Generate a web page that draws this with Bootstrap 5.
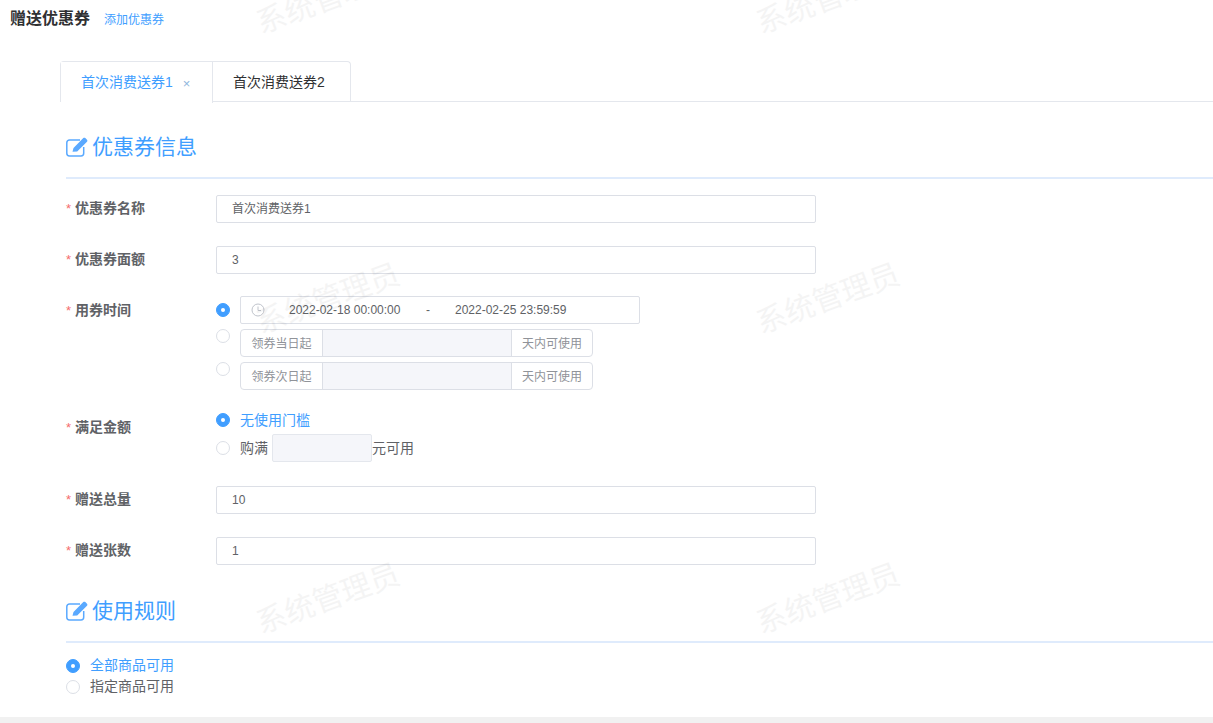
<!DOCTYPE html>
<html lang="zh">
<head>
<meta charset="utf-8">
<title>赠送优惠券</title>
<link rel="stylesheet" href="https://cdn.jsdelivr.net/npm/bootstrap@5.3.0/dist/css/bootstrap.min.css">
<style>
html,body{height:723px;overflow:hidden}
body{background:#f1f1f1;font-family:"Liberation Sans","Noto Sans CJK SC",sans-serif;color:#606266;font-size:14px}
.sheet{position:relative;height:717px;background:#fff;overflow:hidden}
.head-bar{height:37px;padding-left:10px;gap:14px}
.head-title{font-size:16px;font-weight:700;color:#303133;line-height:37px}
.head-link{font-size:12px;color:#409eff;text-decoration:none;line-height:40px}
.tabs-area{margin:24px 0 0 60px;height:41px;border-bottom:1px solid #e4e7ed}
.tab-box{display:flex;border:1px solid #e4e7ed;border-bottom:0;border-radius:4px 4px 0 0;height:41px}
.tab-one{width:152px;height:41px;padding-left:20px;line-height:40px;color:#409eff;background:#fff;border-right:1px solid #e4e7ed;white-space:nowrap}
.tab-two{width:137px;padding-left:20px;line-height:40px;color:#303133;white-space:nowrap}
.tab-x{font-size:13px;margin-left:10px;color:#8fb5dd;position:relative;top:1px}
.sec-head{margin-left:66px;border-bottom:2px solid #dfebfc;color:#409eff;font-size:21px;gap:4px;align-items:center}
.sec-a{margin-top:24px;height:53px;padding-bottom:9px}
.sec-b{margin-top:26px;height:52px;padding-bottom:10px}
.edit-ico{width:22px;height:20px;flex:none}
.f-row{margin-left:66px;display:flex}
.m16{margin-top:16px}.m22{margin-top:22px}.m23{margin-top:23px}.m24{margin-top:24px}
.f-label{width:150px;flex:none;font-weight:700;font-size:14px;line-height:26px;color:#606266;white-space:nowrap}
.f-label i{font-style:normal;font-weight:400;color:#f56c6c;margin-right:4px;font-size:13px}
.f-label-low{margin-top:8px}
.f-label-time{margin-top:1px}
.txt-in{width:600px;height:28px;border:1px solid #dcdfe6;border-radius:2px;padding:0 15px;font-size:12px;line-height:26px;color:#606266;background:#fff}
.r-dot{width:14px;height:14px;border-radius:50%;border:1px solid #dcdfe6;background:#fff;flex:none;display:block}
.r-dot.on{background:#409eff;border-color:#409eff;position:relative}
.r-dot.on::after{content:"";position:absolute;left:4px;top:4px;width:4px;height:4px;border-radius:50%;background:#fff}
.r-row{gap:10px}
.r-h28{height:28px}
.r-h21{height:21px}
.date-box{width:400px;height:28px;border:1px solid #dcdfe6;border-radius:2px;font-size:12px;color:#606266;padding-left:10px;background:#fff}
.date-ico{width:14px;height:14px;flex:none}
.date-a{margin-left:24px;width:137px}
.date-dash{width:29px}
.grp{width:353px;height:28px;border:1px solid #dcdfe6;border-radius:4px;font-size:12px;color:#909399;overflow:hidden;margin-top:5px}
.grp-l{width:82px;border-right:1px solid #dcdfe6;text-align:center;line-height:28px;flex:none}
.grp-m{width:188px;background:#f5f6fa;flex:none}
.grp-r{flex:1;border-left:1px solid #dcdfe6;text-align:center;line-height:28px}
.r-mid{margin-top:5px}
.gray-in{width:100px;height:28px;background:#f5f6fa;border:1px solid #e4e7ed;border-radius:2px;margin-left:4px}
.sel{color:#409eff}
.rule-first{margin-top:12px}
.wm{position:absolute;font-size:30px;color:#000;opacity:.04;transform:rotate(-20deg);white-space:nowrap;line-height:1;pointer-events:none;width:150px;text-align:center}
.wm-l{left:253px}.wm-r{left:753px}
.wm-1{top:-16px}.wm-2{top:284px}.wm-3{top:584px}
</style>
</head>
<body>
<div class="sheet">
  <div class="head-bar d-flex">
    <div class="head-title">赠送优惠券</div>
    <a class="head-link" href="#">添加优惠券</a>
  </div>
  <div class="tabs-area">
    <div class="d-inline-block">
      <div class="tab-box">
        <div class="tab-one">首次消费送券1<span class="tab-x">×</span></div>
        <div class="tab-two">首次消费送券2</div>
      </div>
    </div>
  </div>

  <div class="sec-head sec-a d-flex">
    <svg class="edit-ico" viewBox="0 0 22 20" fill="none"><path d="M14 3H3.500C2 3 .8 4.200 .8 5.700v10.600C.8 17.800 2 19 3.500 19h11.500c1.500 0 2.700-1.200 2.700-2.700V10" stroke="#5aa9ff" stroke-width="1.500"/><path d="M6.500 14.700l1-3.800L17.300 1.100c.6-.6 1.500-.6 2 0l1.700 1.700c.5.5.5 1.400 0 2l-9.800 9.800z" fill="#5aa9ff"/></svg>
    <span>优惠券信息</span>
  </div>

  <div class="f-row m16">
    <div class="f-label"><i>*</i>优惠券名称</div>
    <div class="txt-in">首次消费送券1</div>
  </div>
  <div class="f-row m23">
    <div class="f-label"><i>*</i>优惠券面额</div>
    <div class="txt-in">3</div>
  </div>
  <div class="f-row m22">
    <div class="f-label f-label-time"><i>*</i>用券时间</div>
    <div>
      <div class="d-flex align-items-center r-row">
        <span class="r-dot on"></span><span class="date-box d-flex align-items-center">
          <svg class="date-ico" viewBox="0 0 14 14" fill="none" stroke="#c0c4cc"><circle cx="7" cy="7" r="6"/><path d="M7 3.500V7.500H10"/></svg>
          <span class="date-a">2022-02-18 00:00:00</span><span class="date-dash">-</span><span>2022-02-25 23:59:59</span>
        </span>
      </div>
      <div class="d-flex r-row">
        <span class="r-dot r-mid"></span>
        <div class="grp d-flex"><div class="grp-l">领券当日起</div><div class="grp-m"></div><div class="grp-r">天内可使用</div></div>
      </div>
      <div class="d-flex r-row">
        <span class="r-dot r-mid"></span>
        <div class="grp d-flex"><div class="grp-l">领券次日起</div><div class="grp-m"></div><div class="grp-r">天内可使用</div></div>
      </div>
    </div>
  </div>
  <div class="f-row m16">
    <div class="f-label f-label-low"><i>*</i>满足金额</div>
    <div>
      <div class="d-flex align-items-center r-row r-h28"><span class="r-dot on"></span><span class="sel">无使用门槛</span></div>
      <div class="d-flex align-items-center r-row r-h28"><span class="r-dot"></span><span class="d-flex align-items-center"><span>购满</span><span class="gray-in"></span><span>元可用</span></span></div>
    </div>
  </div>
  <div class="f-row m24">
    <div class="f-label"><i>*</i>赠送总量</div>
    <div class="txt-in">10</div>
  </div>
  <div class="f-row m23">
    <div class="f-label"><i>*</i>赠送张数</div>
    <div class="txt-in">1</div>
  </div>

  <div class="sec-head sec-b d-flex">
    <svg class="edit-ico" viewBox="0 0 22 20" fill="none"><path d="M14 3H3.500C2 3 .8 4.200 .8 5.700v10.600C.8 17.800 2 19 3.500 19h11.500c1.500 0 2.700-1.200 2.700-2.700V10" stroke="#5aa9ff" stroke-width="1.500"/><path d="M6.500 14.700l1-3.800L17.300 1.100c.6-.6 1.500-.6 2 0l1.700 1.700c.5.5.5 1.400 0 2l-9.800 9.800z" fill="#5aa9ff"/></svg>
    <span>使用规则</span>
  </div>
  <div class="f-row align-items-center r-row r-h21 rule-first"><span class="r-dot on"></span><span class="sel">全部商品可用</span></div>
  <div class="f-row align-items-center r-row r-h21"><span class="r-dot"></span><span>指定商品可用</span></div>

  <div class="wm wm-l wm-1">系统管理员</div>
  <div class="wm wm-r wm-1">系统管理员</div>
  <div class="wm wm-l wm-2">系统管理员</div>
  <div class="wm wm-r wm-2">系统管理员</div>
  <div class="wm wm-l wm-3">系统管理员</div>
  <div class="wm wm-r wm-3">系统管理员</div>
</div>
</body>
</html>
